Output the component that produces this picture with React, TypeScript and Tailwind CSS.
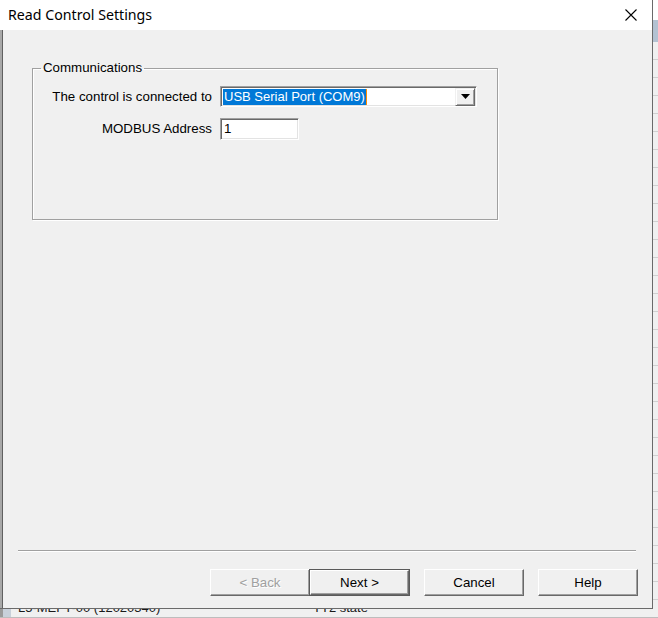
import React from "react";

function Btn({ label, disabled, isDefault }: { label: string; disabled?: boolean; isDefault?: boolean }) {
  if (isDefault) {
    return (
      <div className="h-[27px] w-[101px] border border-[#5a5a5a] flex">
        <div className="flex-1 bg-[#f0f0f0] border border-t-white border-l-white border-r-[#696969] border-b-[#696969] shadow-[inset_-1px_-1px_0_#a0a0a0] flex items-center justify-center text-[13.3px] text-black">
          {label}
        </div>
      </div>
    );
  }
  return (
    <div
      className={
        "h-[27px] w-[100px] bg-[#f0f0f0] border border-t-white border-l-white border-r-[#696969] border-b-[#696969] shadow-[inset_-1px_-1px_0_#a0a0a0] flex items-center justify-center text-[13.3px] " +
        (disabled ? "text-[#a0a0a0] [text-shadow:1px_1px_0_#ffffff]" : "text-black")
      }
    >
      {label}
    </div>
  );
}

export default function App() {
  return (
    <div className="w-[658px] h-[618px] overflow-hidden bg-[#dcdcdc] font-['Liberation_Sans',Arial,sans-serif] flex flex-col">
      <div className="flex h-[609px]">
        {/* dialog */}
        <div className="w-[653px] h-[609px] flex flex-col border-r border-b border-[#6a6a6a]">
          {/* title bar */}
          <div className="h-[30px] bg-white flex items-center justify-between shrink-0">
            <span className="pl-[8px] text-[14.2px] text-black font-['Noto_Sans',sans-serif] leading-none pt-[1px]">
              Read Control Settings
            </span>
            <svg width="12" height="12" viewBox="0 0 12 12" className="mr-[15px]">
              <path d="M0.5 0.5 L11.5 11.5 M11.5 0.5 L0.5 11.5" stroke="#000" strokeWidth="1.1" fill="none" />
            </svg>
          </div>
          {/* body */}
          <div className="flex-1 flex">
            <div className="w-[2px] bg-[#a8a8a8]" />
            <div className="w-[1px] bg-[#606060]" />
            <div className="flex-1 bg-[#f0f0f0] flex flex-col text-[13.3px] text-black">
              {/* group box */}
              <fieldset className="ml-[29px] mt-[31px] w-[466px] h-[159px] border border-[#a0a0a0] shadow-[1px_1px_0_#ffffff,inset_1px_1px_0_#ffffff] px-0">
                <legend className="ml-[8px] px-[2px] text-[13.3px] leading-[14px]">Communications</legend>
                <div className="flex items-center mt-[11px]">
                  <div className="w-[179px] text-right pr-0">The control is connected to</div>
                  <div className="ml-[8px] w-[257px] h-[21px] bg-white border border-t-[#a0a0a0] border-l-[#a0a0a0] border-r-white border-b-white shadow-[inset_1px_1px_0_#696969,inset_-1px_-1px_0_#e3e3e3] flex items-center pl-[2px] pr-[1px]">
                    <div className="flex-1 h-[17px] flex items-center">
                      <span className="bg-[#0078d7] text-white h-[16px] leading-[16px] pl-[1px] pr-[1px] border-r border-[#ff8c00] text-[13px]">
                        USB Serial Port (COM9)
                      </span>
                    </div>
                    <div className="w-[20px] h-[18px] bg-[#f0f0f0] border border-t-[#f0f0f0] border-l-[#f0f0f0] border-r-[#696969] border-b-[#696969] shadow-[inset_1px_1px_0_#ffffff,inset_-1px_-1px_0_#a0a0a0] flex items-center justify-center">
                      <svg width="9" height="5" viewBox="0 0 9 5">
                        <path d="M0 0 H9 L4.5 5 Z" fill="#000" />
                      </svg>
                    </div>
                  </div>
                </div>
                <div className="flex items-center mt-[11px]">
                  <div className="w-[179px] text-right">MODBUS Address</div>
                  <div className="ml-[8px] w-[79px] h-[22px] bg-white border border-t-[#a0a0a0] border-l-[#a0a0a0] border-r-white border-b-white shadow-[inset_1px_1px_0_#696969,inset_-1px_-1px_0_#e3e3e3] flex items-center pl-[3px]">
                    1
                  </div>
                </div>
              </fieldset>
              <div className="flex-1" />
              {/* separator */}
              <div className="ml-[15px] w-[618px] h-[2px] border-t border-[#a0a0a0] border-b border-b-white" />
              <div className="flex mt-[17px] mb-[12px] ml-[207px]">
                <Btn label="< Back" disabled />
                <div className="-ml-[1px]">
                  <Btn label="Next >" isDefault />
                </div>
                <div className="ml-[14px]">
                  <Btn label="Cancel" />
                </div>
                <div className="ml-[14px]">
                  <Btn label="Help" />
                </div>
              </div>
            </div>
          </div>
        </div>
        {/* right background strip */}
        <div className="flex-1 flex flex-col">
          <div className="h-[20px] bg-white" />
          <div className="h-[22px] bg-[#b3c2d2]" />
          <div className="flex-1 bg-[repeating-linear-gradient(to_bottom,#f0f0f0_0px,#f0f0f0_17px,#d0d0d0_17px,#d0d0d0_18px)]" />
        </div>
      </div>
      {/* bottom background strip */}
      <div className="h-[9px] flex bg-[#f0f0f0] overflow-hidden border-b border-[#bdbdbd]">
        <div className="w-[3px] bg-[#9a9a9a]" />
        <div className="w-[8px] bg-[#c8d0da]" />
        <div className="relative flex-1 overflow-hidden">
          <div className="flex -mt-[9px] text-[13px] text-[#1a1a1a] leading-[16px]">
            <span className="ml-[7px] w-[295px]">L5-MEFT-00 (12020340)</span>
            <span>TT2 state</span>
          </div>
        </div>
      </div>
    </div>
  );
}
